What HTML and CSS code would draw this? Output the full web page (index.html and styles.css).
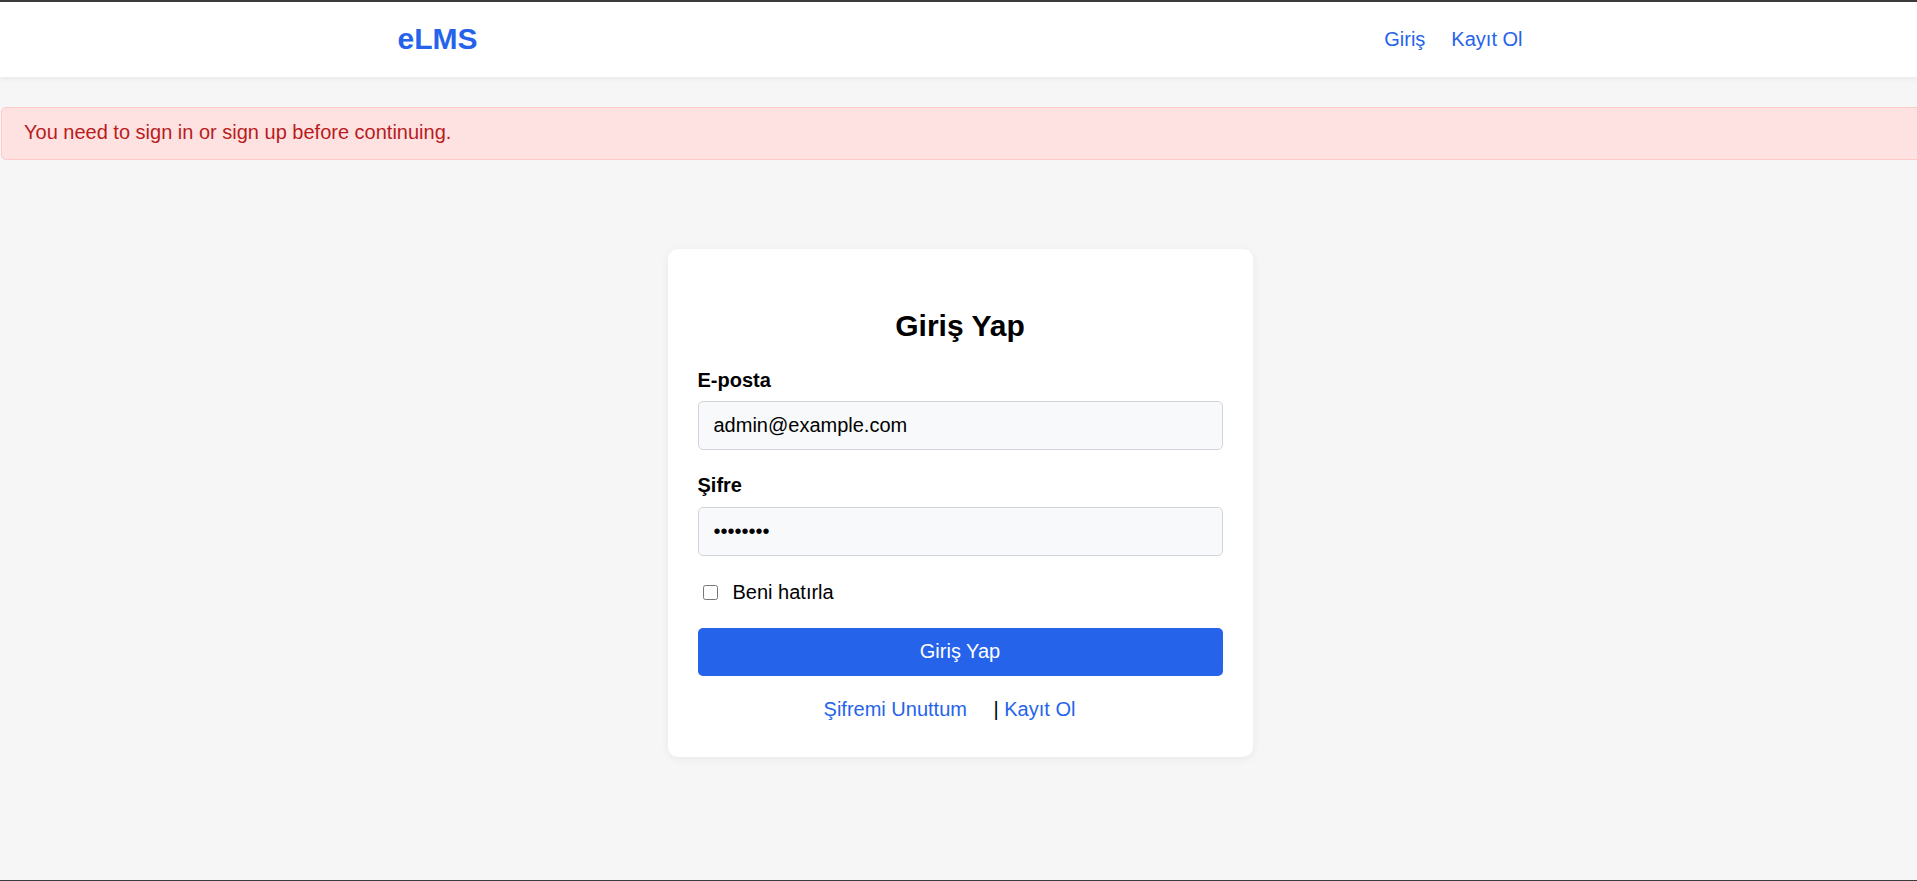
FILE: index.html
```html
<!DOCTYPE html>
<html lang="tr">
<head>
<meta charset="utf-8">
<title>eLMS - Giriş</title>
<link rel="stylesheet" href="styles.css">
</head>
<body>
<div class="page">
  <header class="site-header">
    <div class="container header-inner">
      <a class="brand" href="#">eLMS</a>
      <nav class="nav">
        <a href="#">Giriş</a>
        <a href="#">Kayıt Ol</a>
      </nav>
    </div>
  </header>

  <div class="alert">You need to sign in or sign up before continuing.</div>

  <main class="main">
    <div class="card">
      <h2 class="card-title">Giriş Yap</h2>
      <form class="form">
        <div class="field">
          <label class="label" for="email">E-posta</label>
          <input class="input" id="email" type="email" value="admin@example.com">
        </div>
        <div class="field">
          <label class="label" for="password">Şifre</label>
          <input class="input" id="password" type="password" value="12345678">
        </div>
        <div class="remember">
          <input class="checkbox" id="remember" type="checkbox">
          <label for="remember">Beni hatırla</label>
        </div>
        <button class="btn" type="button">Giriş Yap</button>
      </form>
      <div class="links">
        <a href="#">Şifremi Unuttum</a> | <a href="#">Kayıt Ol</a>
      </div>
    </div>
  </main>
</div>
</body>
</html>
```

FILE: styles.css
```css
* {
  box-sizing: border-box;
}

html, body {
  margin: 0;
  padding: 0;
}

body {
  font-family: "Liberation Sans", Arial, sans-serif;
  font-size: 20px;
  color: #111;
  background: #f6f6f6;
}

.page {
  min-height: 100vh;
  border-top: 2px solid #3b3b3b;
  border-bottom: 1px solid #3b3b3b;
  background: #f6f6f6;
  overflow-x: clip;
}

a {
  color: #2563eb;
  text-decoration: none;
}

.site-header {
  background: #fff;
  padding: 20px 0;
  box-shadow: 0 2px 5px rgba(0, 0, 0, 0.06);
}

.container {
  width: 1128px;
  padding-left: 3px;
  margin: 0 auto;
}

.header-inner {
  display: flex;
  align-items: center;
  justify-content: space-between;
}

.brand {
  font-size: 30px;
  font-weight: bold;
  line-height: 34.5px;
  color: #2563eb;
}

.nav {
  display: flex;
  gap: 26px;
  line-height: 23px;
}

.alert {
  margin: 30px -8px 0 1px;
  background: #fee2e2;
  border: 1px solid #fecaca;
  border-radius: 5px;
  color: #b91c1c;
  padding: 13px 22px 15px;
  line-height: 23px;
}

.main {
  display: flex;
  justify-content: center;
  padding-top: 89px;
  padding-left: 3px;
}

.card {
  width: 585px;
  background: #fff;
  border-radius: 10px;
  padding: 30px 30px 36px;
  box-shadow: 0 2px 10px rgba(0, 0, 0, 0.06);
}

.card-title {
  margin: 30px 0 26px;
  text-align: center;
  font-size: 30px;
  line-height: 34px;
  font-weight: bold;
  color: #000;
}

.form {
  display: flex;
  flex-direction: column;
}

.field {
  display: flex;
  flex-direction: column;
  margin-bottom: 24px;
}

.field + .field {
  margin-bottom: 25px;
}

.label {
  font-weight: bold;
  line-height: 23px;
  margin-bottom: 9px;
  color: #000;
}

.field + .field .label {
  margin-bottom: 10px;
}

.input {
  font-family: inherit;
  font-size: 20px;
  line-height: 23px;
  height: 49px;
  padding: 12px 15px;
  border: 1px solid #d1d5db;
  border-radius: 5px;
  background: #f8f9fa;
  color: #000;
  width: 100%;
}

.remember {
  display: flex;
  align-items: center;
  line-height: 23px;
  margin-bottom: 24px;
  color: #000;
}

.checkbox {
  width: 15px;
  height: 15px;
  margin: 0 15px 0 5px;
}

.btn {
  height: 48px;
  border: none;
  border-radius: 5px;
  background: #2563eb;
  color: #fff;
  font-family: inherit;
  font-size: 20px;
  line-height: 23px;
  cursor: pointer;
}

.links {
  margin-top: 22px;
  text-align: center;
  line-height: 23px;
  color: #000;
}

.links a {
  margin-right: 21px;
}
```
